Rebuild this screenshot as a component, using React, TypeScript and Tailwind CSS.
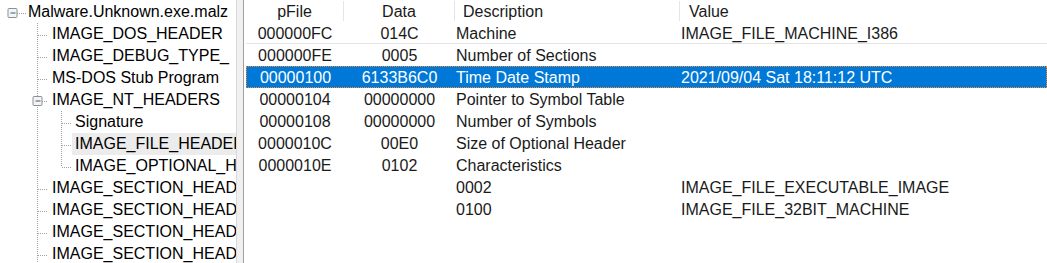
import React from "react";

const FONT = { fontFamily: '"Liberation Sans", Arial, sans-serif' };

function Box({ cx }: { cx: number }) {
  return (
    <g>
      <rect x={cx - 4.5} y={7.5} width={9} height={9} fill="#f4f4f4" stroke="#8e8f8f" rx={1} />
      <line x1={cx - 2} y1={12} x2={cx + 3} y2={12} stroke="#3d5a8e" strokeWidth={1} />
    </g>
  );
}

const dot = { stroke: "#a0a0a0", strokeDasharray: "1 1", strokeWidth: 1 } as const;

type TreeRow = {
  label: string;
  level: 0 | 1 | 2;
  expand?: boolean;
  last?: boolean;
  selected?: boolean;
};

const treeRows: TreeRow[] = [
  { label: "Malware.Unknown.exe.malz", level: 0, expand: true },
  { label: "IMAGE_DOS_HEADER", level: 1 },
  { label: "IMAGE_DEBUG_TYPE_", level: 1 },
  { label: "MS-DOS Stub Program", level: 1 },
  { label: "IMAGE_NT_HEADERS", level: 1, expand: true },
  { label: "Signature", level: 2 },
  { label: "IMAGE_FILE_HEADER", level: 2, selected: true },
  { label: "IMAGE_OPTIONAL_HEADER", level: 2, last: true },
  { label: "IMAGE_SECTION_HEADER .text", level: 1 },
  { label: "IMAGE_SECTION_HEADER .rdata", level: 1 },
  { label: "IMAGE_SECTION_HEADER .data", level: 1 },
  { label: "IMAGE_SECTION_HEADER .rsrc", level: 1 },
];

function Connector({ row }: { row: TreeRow }) {
  if (row.level === 0) {
    return (
      <svg width={28} height={22} className="shrink-0">
        <line x1={17} y1={12.5} x2={26} y2={12.5} {...dot} />
        <Box cx={12.5} />
      </svg>
    );
  }
  if (row.level === 1) {
    return (
      <svg width={51} height={22} className="shrink-0">
        <line x1={37.5} y1={0} x2={37.5} y2={22} {...dot} />
        <line x1={38} y1={12.5} x2={48} y2={12.5} {...dot} />
        {row.expand && <Box cx={37.5} />}
      </svg>
    );
  }
  return (
    <svg width={72} height={22} className="shrink-0">
      <line x1={37.5} y1={0} x2={37.5} y2={22} {...dot} />
      <line x1={61.5} y1={0} x2={61.5} y2={row.last ? 12 : 22} {...dot} />
      <line x1={62} y1={12.5} x2={72} y2={12.5} {...dot} />
    </svg>
  );
}

type Row = {
  pfile: string;
  data: string;
  desc: string;
  value: string;
  selected?: boolean;
  sep?: boolean;
};

const rows: Row[] = [
  { pfile: "000000FC", data: "014C", desc: "Machine", value: "IMAGE_FILE_MACHINE_I386", sep: true },
  { pfile: "000000FE", data: "0005", desc: "Number of Sections", value: "" },
  { pfile: "00000100", data: "6133B6C0", desc: "Time Date Stamp", value: "2021/09/04 Sat 18:11:12 UTC", selected: true },
  { pfile: "00000104", data: "00000000", desc: "Pointer to Symbol Table", value: "" },
  { pfile: "00000108", data: "00000000", desc: "Number of Symbols", value: "" },
  { pfile: "0000010C", data: "00E0", desc: "Size of Optional Header", value: "" },
  { pfile: "0000010E", data: "0102", desc: "Characteristics", value: "" },
  { pfile: "", data: "", desc: "0002", value: "IMAGE_FILE_EXECUTABLE_IMAGE" },
  { pfile: "", data: "", desc: "0100", value: "IMAGE_FILE_32BIT_MACHINE" },
];

export default function App() {
  return (
    <div
      className="flex w-[1047px] h-[263px] overflow-hidden bg-white text-[16px] leading-[22px] text-black"
      style={FONT}
    >
      {/* Tree pane */}
      <div className="w-[236px] shrink-0 overflow-hidden bg-white pt-[1px]">
        {treeRows.map((r, i) => (
          <div key={i} className="flex h-[22px] items-stretch whitespace-nowrap">
            <Connector row={r} />
            {r.level === 2 ? (
              <span className={`pl-[3px] pr-2 flex-1 ${r.selected ? "bg-[#ececec]" : ""}`}>{r.label}</span>
            ) : (
              <span className={r.level === 1 ? "pl-[1px]" : ""}>{r.label}</span>
            )}
          </div>
        ))}
      </div>

      {/* Splitter */}
      <div className="w-[8px] shrink-0 bg-[#f0f0f0] border-l border-[#d9d9d9] border-r border-r-[#a0a0a0]" />

      {/* List pane */}
      <div className="flex-1 min-w-0 pl-[2px] bg-white">
        <div className="flex h-[22px] whitespace-nowrap text-[#1a1a1a] pt-[1px]">
          <div className="w-[98px] text-center border-r border-[#e5e5e5] h-[20px]">pFile</div>
          <div className="w-[111px] text-center border-r border-[#e5e5e5] h-[20px]">Data</div>
          <div className="w-[225px] pl-[8px] border-r border-[#e5e5e5] h-[20px]">Description</div>
          <div className="flex-1 pl-[9px]">Value</div>
        </div>
        {rows.map((r, i) => (
          <div
            key={i}
            className={`flex h-[22px] whitespace-nowrap ${
              r.selected
                ? "bg-[#0078d7] text-white border border-dotted border-[#ff8728] leading-[20px] pt-[1px]"
                : r.sep
                ? "border-b border-[#e3e3e3] text-[#1a1a1a] pt-[1px] leading-[21px]"
                : "text-[#1a1a1a] pt-[1px] leading-[21px]"
            }`}
          >
            <div className={`${r.selected ? "w-[97px]" : "w-[98px]"} text-center`}>{r.pfile}</div>
            <div className="w-[111px] text-center">{r.data}</div>
            <div className="w-[225px] pl-[1px]">{r.desc}</div>
            <div className="flex-1 pl-[1px]">{r.value}</div>
          </div>
        ))}
      </div>
    </div>
  );
}
